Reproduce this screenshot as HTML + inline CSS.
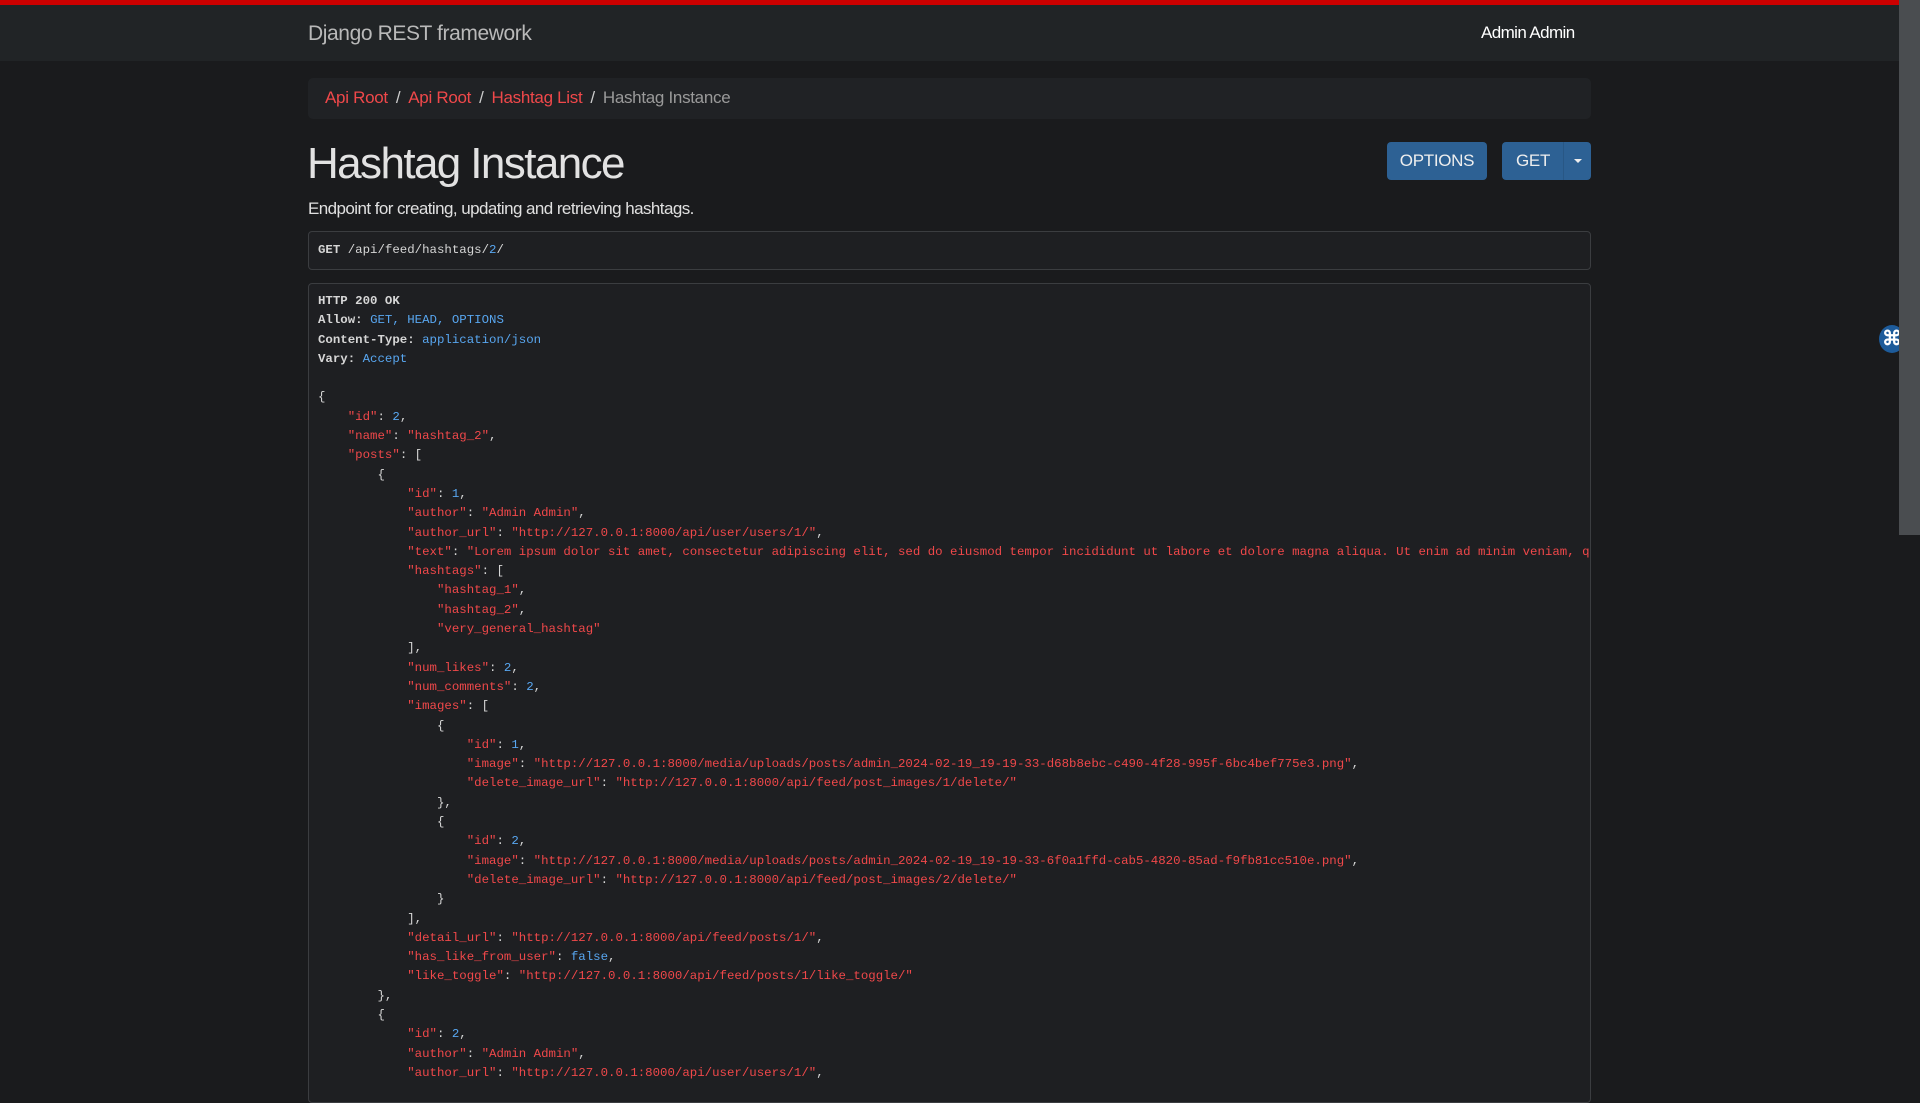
<!DOCTYPE html>
<html><head><meta charset="utf-8"><style>
*{box-sizing:border-box;margin:0;padding:0}
html,body{width:1920px;height:1080px;overflow:hidden;background:#1a1b1d;font-family:"Liberation Sans",sans-serif;color:#dcdcdc}
.red{position:absolute;left:0;top:0;width:1899px;height:5px;background:#cc0000}
.nav{position:absolute;left:0;top:5px;width:1899px;height:56px;background:#212426}
.brand{position:absolute;left:308px;top:17px;font-size:21px;letter-spacing:-0.4px;color:#b9b9b9}
.user{position:absolute;left:1481px;top:18px;font-size:17px;letter-spacing:-0.6px;color:#fff}
.scroll{position:absolute;left:1899px;top:0;width:21px;height:1080px;background:#222426}
.thumb{position:absolute;left:1899px;top:0;width:21px;height:535px;background:#4a4d50}
.crumb{position:absolute;left:308px;top:78px;width:1283px;height:41px;background:#202225;border-radius:5px;font-size:17px;letter-spacing:-0.3px;padding:10px 17px;color:#9a9a9a}
.crumb a{color:#f0484a;text-decoration:none}
.crumb .s{margin:0 8px;color:#ccc}
h1{position:absolute;left:307px;top:139px;font-size:44px;letter-spacing:-1.6px;font-weight:normal;color:#e2e2e2}
.btn{position:absolute;top:142px;height:38px;background:#2d6194;border-radius:4px;color:#eee;font-size:17px;letter-spacing:-0.3px;line-height:38px;text-align:center}
.desc{position:absolute;left:308px;top:199px;font-size:17px;letter-spacing:-0.57px;color:#e0e0e0}
.box{position:absolute;left:308px;width:1283px;background:#1e1f22;border:1px solid #3b3d40;border-radius:4px;font-family:"Liberation Mono",monospace;font-size:12.4px;line-height:19.3px;color:#d6d6d6;white-space:pre;overflow:hidden;padding:0 9px}
.req{top:231px;height:39px;padding-top:9px}
.res{top:283px;height:820px;padding-top:8px}
.k{color:#f0484a}.s1{color:#f0484a}.n{color:#58a6f0}.b{font-weight:bold}
.cmd{position:absolute;left:1879px;top:325px;width:26px;height:28px;border-radius:50%;background:#1d5b9a;color:#fff;font-size:20px;line-height:28px;text-align:center;font-weight:bold}
</style></head><body>
<div class="red"></div>
<div class="nav"><div class="brand">Django REST framework</div><div class="user">Admin Admin</div></div>
<div class="crumb"><a>Api Root</a><span class="s">/</span><a>Api Root</a><span class="s">/</span><a>Hashtag List</a><span class="s">/</span>Hashtag Instance</div>
<h1>Hashtag Instance</h1>
<div class="btn" style="left:1387px;width:100px">OPTIONS</div>
<div class="btn" style="left:1502px;width:89px"><span style="position:absolute;left:14px">GET</span><span style="position:absolute;left:61px;top:0;width:1px;height:38px;background:#285785"></span><span style="position:absolute;left:72px;top:17px;width:0;height:0;border-left:4px solid transparent;border-right:4px solid transparent;border-top:4px solid #eee"></span></div>
<div class="desc">Endpoint for creating, updating and retrieving hashtags.</div>
<div class="box req"><span class="b">GET</span> /api/feed/hashtags/<span class="n">2</span>/</div>
<div class="box res"><span class="b">HTTP 200 OK</span>
<span class="b">Allow:</span> <span class="n">GET, HEAD, OPTIONS</span>
<span class="b">Content-Type:</span> <span class="n">application/json</span>
<span class="b">Vary:</span> <span class="n">Accept</span>

{
    <span class="k">"id"</span>: <span class="n">2</span>,
    <span class="k">"name"</span>: <span class="s1">"hashtag_2"</span>,
    <span class="k">"posts"</span>: [
        {
            <span class="k">"id"</span>: <span class="n">1</span>,
            <span class="k">"author"</span>: <span class="s1">"Admin Admin"</span>,
            <span class="k">"author_url"</span>: <span class="s1">"http://127.0.0.1:8000/api/user/users/1/"</span>,
            <span class="k">"text"</span>: <span class="s1">"Lorem ipsum dolor sit amet, consectetur adipiscing elit, sed do eiusmod tempor incididunt ut labore et dolore magna aliqua. Ut enim ad minim veniam, quis nostrud exercitation"</span>,
            <span class="k">"hashtags"</span>: [
                <span class="s1">"hashtag_1"</span>,
                <span class="s1">"hashtag_2"</span>,
                <span class="s1">"very_general_hashtag"</span>
            ],
            <span class="k">"num_likes"</span>: <span class="n">2</span>,
            <span class="k">"num_comments"</span>: <span class="n">2</span>,
            <span class="k">"images"</span>: [
                {
                    <span class="k">"id"</span>: <span class="n">1</span>,
                    <span class="k">"image"</span>: <span class="s1">"http://127.0.0.1:8000/media/uploads/posts/admin_2024-02-19_19-19-33-d68b8ebc-c490-4f28-995f-6bc4bef775e3.png"</span>,
                    <span class="k">"delete_image_url"</span>: <span class="s1">"http://127.0.0.1:8000/api/feed/post_images/1/delete/"</span>
                },
                {
                    <span class="k">"id"</span>: <span class="n">2</span>,
                    <span class="k">"image"</span>: <span class="s1">"http://127.0.0.1:8000/media/uploads/posts/admin_2024-02-19_19-19-33-6f0a1ffd-cab5-4820-85ad-f9fb81cc510e.png"</span>,
                    <span class="k">"delete_image_url"</span>: <span class="s1">"http://127.0.0.1:8000/api/feed/post_images/2/delete/"</span>
                }
            ],
            <span class="k">"detail_url"</span>: <span class="s1">"http://127.0.0.1:8000/api/feed/posts/1/"</span>,
            <span class="k">"has_like_from_user"</span>: <span class="n">false</span>,
            <span class="k">"like_toggle"</span>: <span class="s1">"http://127.0.0.1:8000/api/feed/posts/1/like_toggle/"</span>
        },
        {
            <span class="k">"id"</span>: <span class="n">2</span>,
            <span class="k">"author"</span>: <span class="s1">"Admin Admin"</span>,
            <span class="k">"author_url"</span>: <span class="s1">"http://127.0.0.1:8000/api/user/users/1/"</span>,
</div>
<div class="cmd">⌘</div>
<div class="thumb"></div>
</body></html>
